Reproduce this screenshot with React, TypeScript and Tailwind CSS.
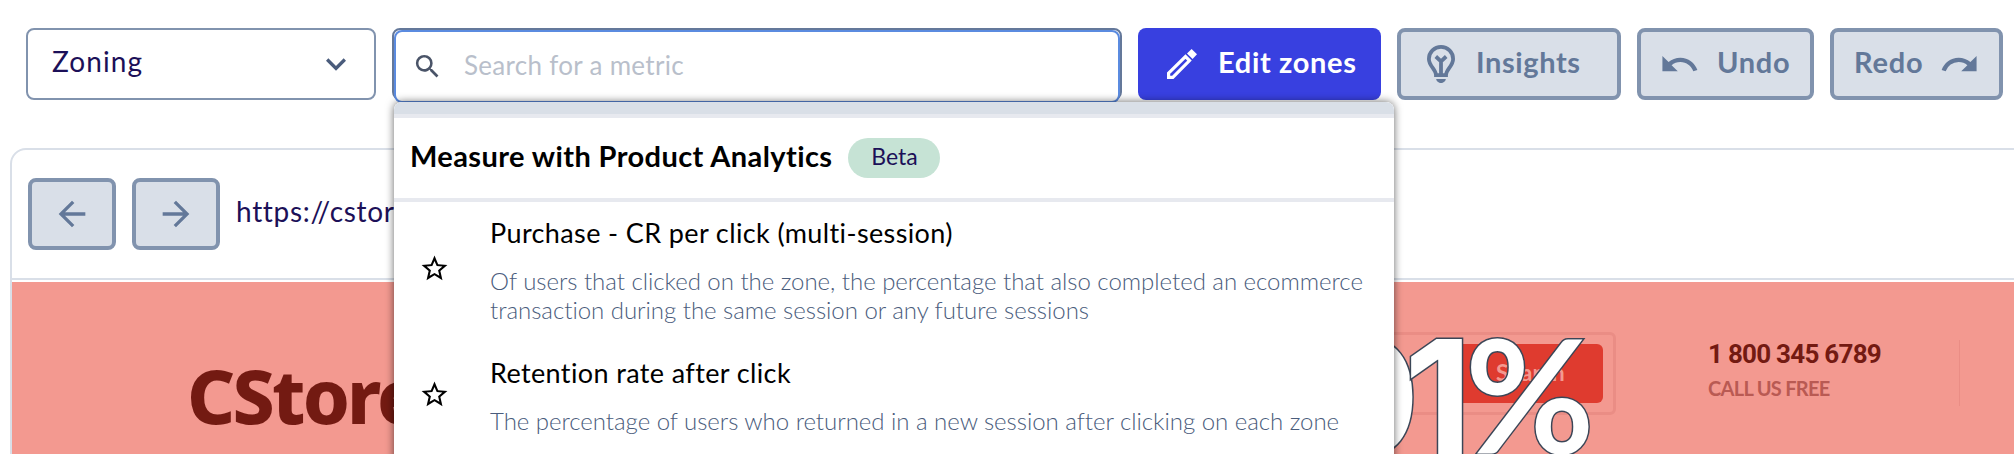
import React from 'react';
import {
  MdArrowBack,
  MdArrowForward,
  MdKeyboardArrowDown,
  MdRedo,
  MdSearch,
  MdStarBorder,
  MdUndo,
} from 'react-icons/md';

const metrics = [
  {
    name: 'Purchase - CR per click (multi-session)',
    description:
      'Of users that clicked on the zone, the percentage that also completed an ecommerce transaction during the same session or any future sessions',
  },
  {
    name: 'Retention rate after click',
    description: 'The percentage of users who returned in a new session after clicking on each zone',
  },
];

const PencilIcon = () => (
  <svg width="30" height="30" viewBox="0 0 30 30" className="shrink-0">
    <path d="M1.6 28.4v-4.3L18.5 7.6l4 4L5.8 28.4z" fill="none" stroke="#fff" strokeWidth="3.2" />
    <path d="M20 4.6 24.6 0 30 5.2 25.6 9.9z" fill="#fff" />
  </svg>
);

const BulbIcon = () => (
  <svg width="28" height="38" viewBox="0 0 28 38" className="shrink-0">
    <g fill="none" stroke="#637899" strokeWidth="3.8">
      <path d="M9 30.2C9 24.5 1.9 21 1.9 14a12.1 12.1 0 0 1 24.2 0c0 7-7.1 10.5-7.1 16.2z" />
      <path d="M14 30V17.5M8.8 11.5l5.2 4.8 5.2-4.8" />
    </g>
    <path d="M9.2 34h9.6c0 2-2.6 4-4.8 4s-4.8-2-4.8-4z" fill="#637899" />
  </svg>
);

const Toolbar: React.FC = () => (
  <div className="flex h-[100px] gap-4 pt-7 pl-[26px]">
    <div className="flex h-[72px] w-[350px] shrink-0 items-center justify-between rounded-lg border-2 border-[#8193ae] pr-[18px] pl-6 text-[#1c1058]">
      <span className="pb-1.5 text-[28px] leading-none tracking-[1.1px]">Zoning</span>
      <MdKeyboardArrowDown className="size-10 text-[#4a5c7c]" />
    </div>

    <div className="h-[72px] w-[730px] shrink-0 rounded-lg border-2 border-[#64789a]">
      <div className="flex h-[73px] items-center rounded-lg border-2 border-[#5b8be0] bg-white pl-4">
        <MdSearch className="size-[31px] text-[#4a5468]" />
        <span className="ml-[21px] pb-1 text-[26px] leading-none tracking-[0.3px] text-[#b9bfcb]">Search for a metric</span>
      </div>
    </div>

    <button className="flex h-[72px] w-[243px] shrink-0 items-center rounded-lg bg-[#3840e0] pl-[29px] text-[29px] font-bold text-white">
      <PencilIcon />
      <span className="ml-[21px] pb-1.5 leading-none tracking-[0.65px]">Edit zones</span>
    </button>
    <button className="flex h-[72px] w-[224px] shrink-0 items-center rounded-lg border-4 border-[#8193ae] bg-[#d9dfe8] pl-[26px] text-[29px] font-bold text-[#637899]">
      <BulbIcon />
      <span className="ml-[21px] pb-1.5 leading-none tracking-[0.6px]">Insights</span>
    </button>
    <button className="flex h-[72px] w-[177px] shrink-0 items-center rounded-lg border-4 border-[#8193ae] bg-[#d9dfe8] pl-[18px] text-[29px] font-bold text-[#637899]">
      <MdUndo className="size-[41px] shrink-0" />
      <span className="ml-[17px] pb-1.5 leading-none tracking-[0.7px]">Undo</span>
    </button>
    <button className="flex h-[72px] w-[173px] shrink-0 items-center rounded-lg border-4 border-[#8193ae] bg-[#d9dfe8] pl-5 text-[29px] font-bold text-[#637899]">
      <span className="pb-1.5 leading-none tracking-[0.8px]">Redo</span>
      <MdRedo className="ml-4 size-[41px] shrink-0" />
    </button>
  </div>
);

const SiteHero: React.FC = () => (
  <div className="relative mt-0.5 h-[172px] overflow-hidden bg-[#f39990]">
    <div className="flex pt-[50px]">
      <span className="mt-[23px] ml-[175px] w-[599px] font-['Noto_Sans'] text-[75px] leading-[80px] font-extrabold tracking-[-2.8px] text-[#731a12]">
        CStore
      </span>
      <div className="flex h-[83px] w-[830px] justify-end rounded-md border-3 border-[#ea8d85] p-[9px] pr-[10px]">
        <div className="flex h-[59px] w-[150px] items-center rounded-md bg-[#df3b2f] pl-[43px] text-[23px] font-bold text-[#f39990]">
          <span className="pb-0.5 leading-none">Search</span>
        </div>
      </div>
      <div className="mt-2 ml-[92px] flex h-[66px] w-[252px] flex-col border-r border-[#ea8d85] font-bold whitespace-nowrap">
        <span className="font-['Roboto'] text-[26px] leading-[28px] tracking-[-0.75px] text-[#731a12]">1 800 345 6789</span>
        <span className="mt-2 text-[20px] leading-6 tracking-[-0.7px] text-[#b95a53]">CALL US FREE</span>
      </div>
    </div>

    {/* zone value drawn over the page */}
    <div className="absolute top-[21px] left-[1301px] flex h-[180px] items-baseline font-['Inter'] text-[158px] leading-[180px] font-bold text-white [paint-order:stroke_fill] [-webkit-text-stroke:3px_#3b4657]">
      <span className="w-[91px]">0</span>
      <span className="w-[61px]">1</span>
      <span className="font-['Lato']">%</span>
    </div>
  </div>
);

const MetricMenu: React.FC = () => (
  <div className="absolute top-[102px] left-[394px] h-[352px] w-[1000px] overflow-hidden rounded-t-lg bg-white text-black">
    <div className="h-4 border-b-4 border-[#e7e9ef] bg-[#d9dfe7]" />
    <div className="flex h-[84px] items-center border-b-4 border-[#e7e9ef] pl-4">
      <span className="pb-1.5 text-[29px] leading-none font-bold tracking-[0.4px]">Measure with Product Analytics</span>
      <span className="ml-4 flex h-10 w-[92px] items-center justify-center rounded-full bg-[#c6e3d5] pb-1 text-[23px] leading-none text-[#1c1058]">
        Beta
      </span>
    </div>
    <div className="flex flex-col gap-[33px] pt-[15px]">
      {metrics.map((metric) => (
        <div key={metric.name} className="flex items-center">
          <MdStarBorder className="mb-1 ml-[25px] size-[31px] shrink-0" />
          <div className="ml-10 w-[890px]">
            <div className="text-[27px] leading-8 tracking-[0.38px]">{metric.name}</div>
            <div className="mt-[17px] text-[24px] leading-[29px] font-light tracking-[-0.03px] text-[#4a5c7c]">{metric.description}</div>
          </div>
        </div>
      ))}
    </div>
  </div>
);

export default function App() {
  return (
    <div className="relative h-[454px] w-[2014px] overflow-hidden bg-white font-['Lato',sans-serif]">
      <Toolbar />
      <div className="mt-12 ml-2.5 h-[320px] w-[2020px] overflow-hidden rounded-tl-2xl border-2 border-[#d9dfe8]">
        <div className="flex h-[130px] items-center border-b-2 border-[#d9dfe8] pl-4">
          <button className="flex h-[72px] w-[88px] items-center justify-center rounded-lg border-4 border-[#8193ae] bg-[#d9dfe8] text-[#637899]">
            <MdArrowBack className="size-10" />
          </button>
          <button className="ml-4 flex h-[72px] w-[88px] items-center justify-center rounded-lg border-4 border-[#8193ae] bg-[#d9dfe8] text-[#637899]">
            <MdArrowForward className="size-10" />
          </button>
          <span className="ml-4 pb-1.5 text-[28px] leading-none tracking-[0.7px] text-[#1c1058]">https://cstore</span>
        </div>
        <SiteHero />
      </div>
      <div className="absolute top-[102px] left-[394px] h-[400px] w-[1000px] rounded-t-lg shadow-[0_0_8px_rgba(0,0,0,0.6)]" />
      <MetricMenu />
    </div>
  );
}
